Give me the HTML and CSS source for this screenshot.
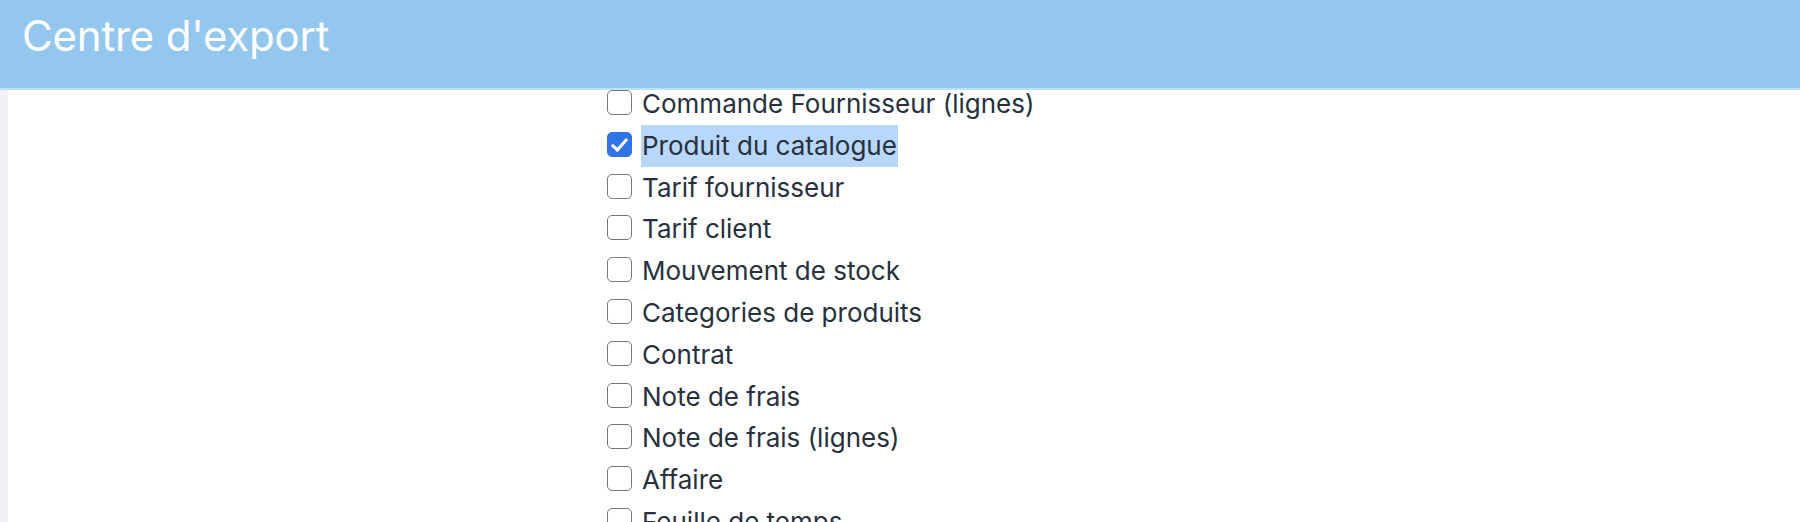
FILE: index.html
```html
<!DOCTYPE html>
<html lang="fr">
<head>
    <meta charset="UTF-8">
    <meta name="viewport" content="width=device-width, initial-scale=1.0">
    <title>Centre d'export</title>
    <link rel="stylesheet" href="styles.css">
</head>
<body>
    <div class="header">
        <h1>Centre d'export</h1>
    </div>

    <div class="page">
        <div class="side"></div>

        <!-- liste des exports -->
        <div class="content">
            <ul class="export-list">
                <li><label><input type="checkbox"> <span>Commande Fournisseur (lignes)</span></label></li>
                <li><label><input type="checkbox" checked> <span class="selected">Produit du catalogue</span></label></li>
                <li><label><input type="checkbox"> <span>Tarif fournisseur</span></label></li>
                <li><label><input type="checkbox"> <span>Tarif client</span></label></li>
                <li><label><input type="checkbox"> <span>Mouvement de stock</span></label></li>
                <li><label><input type="checkbox"> <span>Categories de produits</span></label></li>
                <li><label><input type="checkbox"> <span>Contrat</span></label></li>
                <li><label><input type="checkbox"> <span>Note de frais</span></label></li>
                <li><label><input type="checkbox"> <span>Note de frais (lignes)</span></label></li>
                <li><label><input type="checkbox"> <span>Affaire</span></label></li>
                <li><label><input type="checkbox"> <span>Feuille de temps</span></label></li>
            </ul>
        </div>
    </div>
</body>
</html>
```

FILE: styles.css
```css
/* base */
body {
    margin: 0;
    padding: 0;
    font-family: 'Inter', 'Noto Sans', sans-serif;
    background-color: #fff;
    color: #27303d;
    overflow: hidden;
}

.header {
    position: relative;
    z-index: 2;
    height: 88px;
    background-color: #94c7ed;
    border-bottom: 2px solid #b9e2f7;
}

.header h1 {
    margin: 0;
    padding: 11px 0 0 22px;
    font-size: 42px;
    font-weight: 400;
    letter-spacing: -0.2px;
    color: #fff;
    line-height: 50px;
}

.page {
    display: flex;
    height: 432px;
}

.side {
    width: 8px;
    background-color: #f0f0f6;
}

.content {
    flex: 1;
    background-color: #fff;
}

/* liste */
.export-list {
    list-style: none;
    margin: -7px 0 0 599px;
    padding: 0;
}

.export-list li {
    height: 41.8px;
    line-height: 42px;
    font-size: 26px;
}

.export-list label {
    display: flex;
    align-items: center;
    gap: 10px;
    height: 42px;
}

.export-list span {
    display: inline-block;
    line-height: 42px;
    padding: 0 1px;
    margin-left: -1px;
}

.export-list span.selected {
    background-color: #b9d7fa;
}

.export-list input {
    appearance: none;
    -webkit-appearance: none;
    position: relative;
    width: 25px;
    height: 25px;
    margin: -3px 0 0 0;
    border: 1.5px solid #767676;
    border-radius: 5px;
    background-color: #fff;
    box-sizing: border-box;
    flex-shrink: 0;
}

.export-list input:checked {
    background-color: #3274e6;
    border-color: #3274e6;
}

.export-list input:checked::after {
    content: '';
    position: absolute;
    left: 7px;
    top: 2px;
    width: 6px;
    height: 13px;
    border: solid #fff;
    border-width: 0 3px 3px 0;
    transform: rotate(42deg);
}
```
